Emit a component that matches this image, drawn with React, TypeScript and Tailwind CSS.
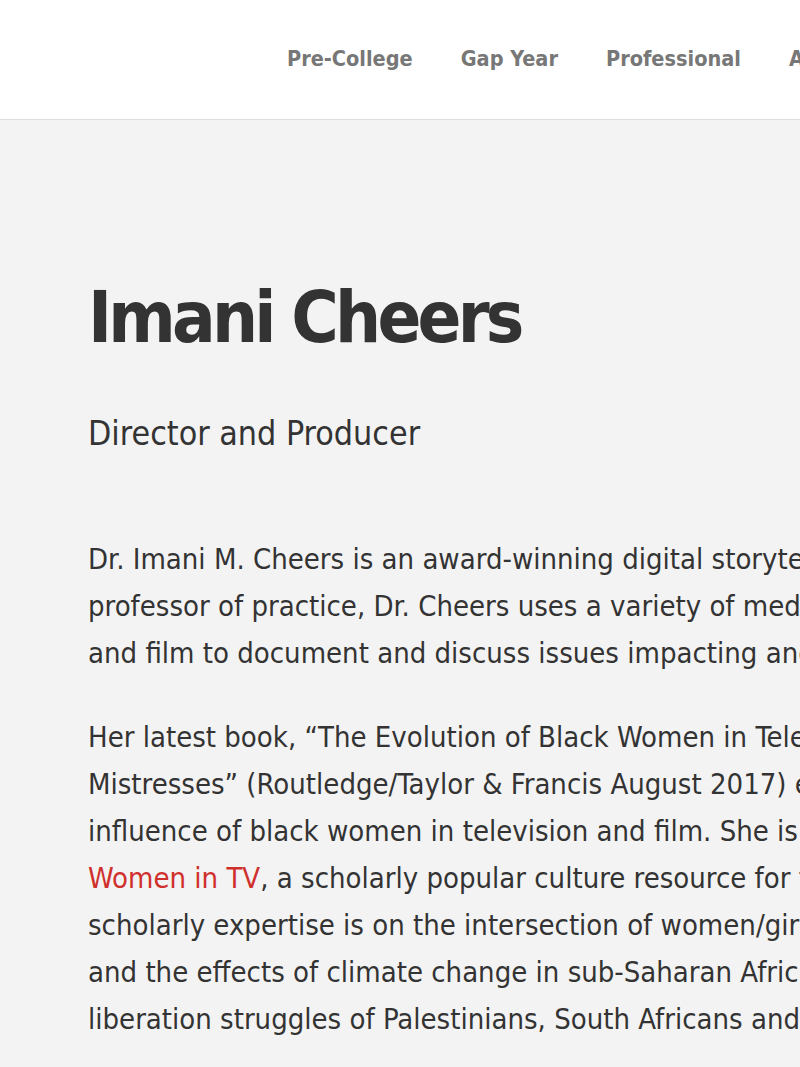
import React from "react";

const font = { fontFamily: '"Liberation Sans Narrow", "DejaVu Sans Condensed", "Liberation Sans", sans-serif' };

export default function App() {
  const p1 = [
    "Dr. Imani M. Cheers is an award-winning digital storyteller and educator. As an assistant",
    "professor of practice, Dr. Cheers uses a variety of media platforms including photography",
    "and film to document and discuss issues impacting and affecting women and girls.",
  ];
  return (
    <div className="w-[800px] h-[1067px] overflow-hidden bg-[#f3f3f3]" style={font}>
      <header className="h-[120px] bg-white border-b border-[#dedede] flex items-center">
        <nav className="flex items-center gap-[48px] pl-[287px] whitespace-nowrap text-[21.5px] font-bold text-[#777] -mt-[1px]">
          <span>Pre-College</span>
          <span>Gap Year</span>
          <span>Professional</span>
          <span>About</span>
        </nav>
      </header>
      <main className="pl-[88px] text-[#333] whitespace-nowrap">
        <h1 className="mt-[152px] text-[72px] leading-[90px] font-bold tracking-[-3.8px]">Imani Cheers</h1>
        <p className="mt-[52px] text-[33.7px] leading-[40px]">Director and Producer</p>
        <div className="mt-[82px] text-[29px] leading-[47px]">
          {p1.map((l, i) => (
            <div key={i}>{l}</div>
          ))}
        </div>
        <div className="mt-[37px] text-[29px] leading-[47px]">
          <div>Her latest book, “The Evolution of Black Women in Television: Mammies, Matriarchs and</div>
          <div>Mistresses” (Routledge/Taylor &amp; Francis August 2017) explores the representation and</div>
          <div>influence of black women in television and film. She is also the creator of Black</div>
          <div>
            <a className="text-[#d0302c]">Women in TV</a>, a scholarly popular culture resource for the study of black women. Her
          </div>
          <div>scholarly expertise is on the intersection of women/girls, health, the environment</div>
          <div>and the effects of climate change in sub-Saharan Africa, as well as the</div>
          <div>liberation struggles of Palestinians, South Africans and African Americans.</div>
        </div>
      </main>
    </div>
  );
}
